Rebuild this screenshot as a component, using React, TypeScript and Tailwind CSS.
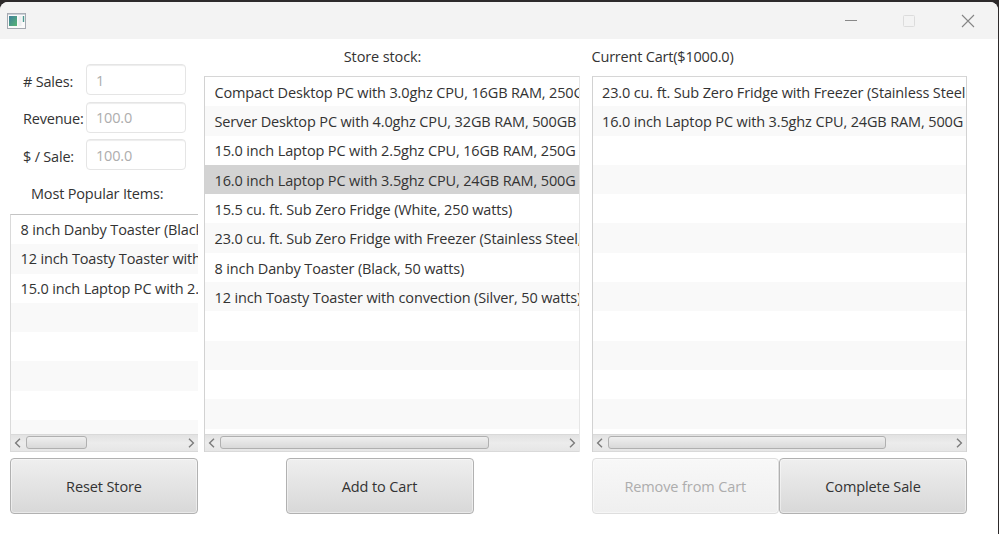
import React from "react";

const popular = [
  "8 inch Danby Toaster (Black",
  "12 inch Toasty Toaster with",
  "15.0 inch Laptop PC with 2.",
];
const stock = [
  "Compact Desktop PC with 3.0ghz CPU, 16GB RAM, 250G",
  "Server Desktop PC with 4.0ghz CPU, 32GB RAM, 500GB",
  "15.0 inch Laptop PC with 2.5ghz CPU, 16GB RAM, 250G",
  "16.0 inch Laptop PC with 3.5ghz CPU, 24GB RAM, 500G",
  "15.5 cu. ft. Sub Zero Fridge (White, 250 watts)",
  "23.0 cu. ft. Sub Zero Fridge with Freezer (Stainless Steel,",
  "8 inch Danby Toaster (Black, 50 watts)",
  "12 inch Toasty Toaster with convection (Silver, 50 watts)",
];
const cart = [
  "23.0 cu. ft. Sub Zero Fridge with Freezer (Stainless Steel",
  "16.0 inch Laptop PC with 3.5ghz CPU, 24GB RAM, 500G",
];

function Arrow({ right = false }: { right?: boolean }) {
  return (
    <svg width="7" height="10" viewBox="0 0 7 10" className="shrink-0" fill="none" stroke="#7c7c7c" strokeWidth="1.4">
      <path d={right ? "M1 0.8L5.4 5L1 9.2" : "M6 0.8L1.6 5L6 9.2"} />
    </svg>
  );
}

function List({ items, rows, selected, thumb, rowClass = "", className }: {
  items: string[]; rows: number; selected?: number; thumb: string; rowClass?: string; className: string;
}) {
  return (
    <div className={`flex flex-col overflow-hidden border-l border-t bg-white ${className}`}>
      <div className="min-h-0 flex-1 overflow-hidden tracking-[-0.135px]">
        {Array.from({ length: rows }, (_, i) => (
          <div
            key={i}
            className={`flex h-[29.3px] items-center overflow-hidden whitespace-pre pl-[9.5px] ${rowClass} ${
              i === selected ? "bg-[#d3d3d3]" : i % 2 ? "bg-[#f9f9f9]" : "bg-white"
            }`}
          >
            {items[i] ?? ""}
          </div>
        ))}
      </div>
      <div className="flex h-[18px] shrink-0 items-center border-y border-[#d9d9d9] bg-linear-to-b from-[#e2e2e2] via-[#ececec] to-[#e6e6e6] pl-[3px] pr-[3px]">
        <Arrow />
        <div className="ml-[5px] flex-1">
          <div className={`-mt-px h-[13px] rounded-[3px] border border-[#b0b0b0] bg-linear-to-b from-[#efefef] to-[#d9d9d9] ${thumb}`} />
        </div>
        <Arrow right />
      </div>
    </div>
  );
}

function Button({ children, disabled = false, className = "" }: {
  children: React.ReactNode; disabled?: boolean; className?: string;
}) {
  return (
    <button
      disabled={disabled}
      className={`h-[56px] shrink-0 rounded-[4px] border bg-linear-to-b pt-px shadow-[inset_0_0_0_1px_rgba(255,255,255,0.45)] ${
        disabled
          ? "border-[#dedede] from-[#f8f8f8] to-[#efefef] text-[#adadad]"
          : "border-[#b1b1b1] from-[#efefef] to-[#d8d8d8]"
      } ${className}`}
    >
      {children}
    </button>
  );
}

function Field({ label, value }: { label: string; value: string }) {
  return (
    <div className="flex h-[31px] items-center">
      <span className="w-[62.5px] shrink-0 whitespace-nowrap pt-[4px] tracking-[-0.2px]">{label}</span>
      <div className="flex h-[31px] w-[100px] items-center rounded-[4px] border border-[#e5e5e5] bg-white pl-[9.5px] pt-[2px] tracking-[-0.2px] text-[#adadad] shadow-[inset_0_2px_1px_-1px_#ededed]">
        {value}
      </div>
    </div>
  );
}

export default function App() {
  return (
    <div className="h-[534px] w-[999px] overflow-hidden bg-[#2d2a2b] pr-px pt-[2px] font-['Open_Sans','Noto_Sans',sans-serif] text-[14.5px] leading-[20px] tracking-[-0.11px] text-[#333]">
      <div className="flex h-[532px] flex-col overflow-hidden rounded-t-[8px] bg-white">
        <header className="flex h-[37px] shrink-0 items-center justify-between bg-[#f3f3f3] pl-[7px] pr-[23px]">
          <svg width="19" height="16" viewBox="0 0 19 16">
            <rect x="0.5" y="0.5" width="18" height="15" fill="#fafafa" stroke="#a5a9b1" />
            <path d="M1 1.2h17" stroke="#b9bfc8" />
            <defs>
              <linearGradient id="pane" x1="0" y1="0" x2="1" y2="1">
                <stop stopColor="#3f7f9c" />
                <stop offset="1" stopColor="#57b573" />
              </linearGradient>
            </defs>
            <rect x="2" y="3" width="8" height="10" fill="url(#pane)" />
            <rect x="11.5" y="3" width="3" height="10" fill="#eceef0" />
            <path d="M16.5 3v6" stroke="#4c9990" strokeWidth="1.4" />
          </svg>
          <div className="flex items-center">
            <svg width="130" height="14" viewBox="0 0 130 14" fill="none">
              <path d="M0 6.5h12" stroke="#888" />
              <rect x="58.5" y="1.5" width="11" height="11" rx="1" stroke="#dcdcdc" />
              <path d="M117 1l12 12M129 1l-12 12" stroke="#858585" strokeWidth="1.1" />
            </svg>
          </div>
        </header>
        <main className="flex flex-1 pl-[10px]">
          <section className="flex w-[188px] flex-col">
            <div className="mt-[25px] flex flex-col gap-[6.5px] pl-[13px]">
              <Field label="# Sales:" value="1" />
              <Field label="Revenue:" value="100.0" />
              <Field label="$ / Sale:" value="100.0" />
            </div>
            <div className="mt-[14px] pl-[21px] tracking-[-0.18px]">Most Popular Items:</div>
            <List items={popular} rows={8} thumb="w-[61px]" rowClass="pt-px" className="mt-[10px] h-[238px] border-l-[#dadada] border-t-[#c4c4c4]" />
            <Button className="mt-[6px]">Reset Store</Button>
          </section>
          <section className="ml-[6px] flex w-[376px] flex-col items-center">
            <div className="mt-[8px] pr-[19px]">Store stock:</div>
            <List items={stock} rows={12} selected={3} thumb="w-[269px]" rowClass="pt-[2.5px]" className="mt-[9px] h-[376px] w-full border-r border-l-[#d2d2d2] border-r-[#e6e6e6] border-t-[#d6d6d6]" />
            <Button className="mr-[25px] mt-[6px] w-[188px]">Add to Cart</Button>
          </section>
          <section className="ml-[11.5px] flex w-[375.5px] flex-col">
            <div className="mt-[8px] tracking-[-0.2px]">Current Cart($1000.0)</div>
            <List items={cart} rows={12} thumb="w-[278px]" rowClass="pt-[2.5px]" className="mt-[9px] h-[376px] border-r border-l-[#d2d2d2] border-r-[#d2d2d2] border-t-[#d6d6d6]" />
            <div className="mt-[6px] flex">
              <Button disabled className="w-[187.5px]">Remove from Cart</Button>
              <Button className="w-[188px]">Complete Sale</Button>
            </div>
          </section>
        </main>
      </div>
    </div>
  );
}
